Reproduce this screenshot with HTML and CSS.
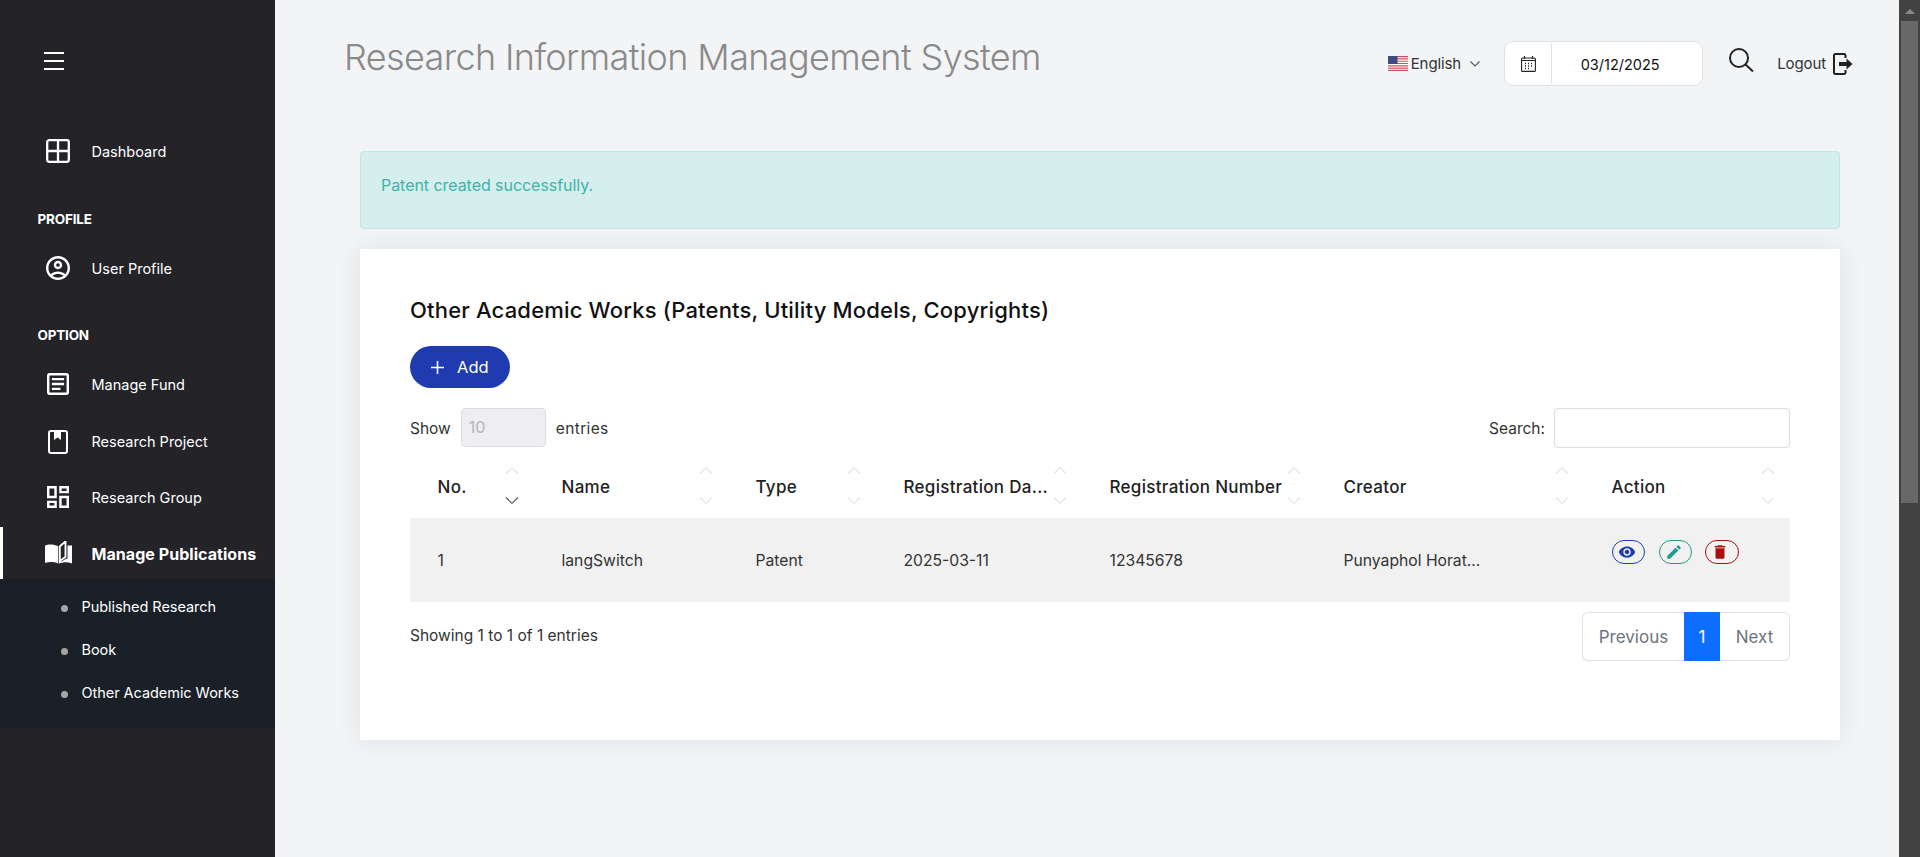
FILE: index.html
```html
<!DOCTYPE html>
<html lang="en">
<head>
<meta charset="utf-8">
<title>Research Information Management System</title>
<link rel="stylesheet" href="styles.css">
</head>
<body>
<div class="page">
  <aside class="sidebar">
    <div class="toggle"><span class="burger"><i></i><i></i><i></i></span></div>
    <nav class="nav">
      <a class="item"><span class="ico"><svg width="24" height="24" viewBox="0 0 24 24" fill="none" stroke="#fff" stroke-width="2.300"><rect x="1.200" y="1.200" width="21.600" height="21.600" rx="2"/><path d="M12 1v22M1 12h22"/></svg></span>Dashboard</a>
      <div class="label label-first">PROFILE</div>
      <a class="item item-after-label"><span class="ico"><svg width="24" height="24" viewBox="2 2 20 20" fill="#fff"><path d="M12 2C6.48 2 2 6.48 2 12s4.48 10 10 10 10-4.48 10-10S17.52 2 12 2zM7.35 18.5C8.66 17.56 10.26 17 12 17s3.34.56 4.65 1.5c-1.31.94-2.91 1.5-4.65 1.5s-3.34-.56-4.65-1.5zm10.79-1.38C16.45 15.8 14.32 15 12 15s-4.45.8-6.14 2.12C4.7 15.73 4 13.95 4 12c0-4.42 3.58-8 8-8s8 3.58 8 8c0 1.95-.7 3.73-1.86 5.12zM12 6c-1.93 0-3.5 1.57-3.5 3.5S10.07 13 12 13s3.5-1.57 3.5-3.5S13.93 6 12 6zm0 5c-.83 0-1.5-.67-1.5-1.5S11.17 8 12 8s1.5.67 1.5 1.5S12.83 11 12 11z"/></svg></span>User Profile</a>
      <div class="label">OPTION</div>
      <a class="item item-after-label item-tight"><span class="ico"><svg width="22" height="22" viewBox="3 3 18 18" fill="#fff"><path d="M19 5v14H5V5h14m0-2H5c-1.1 0-2 .9-2 2v14c0 1.1.9 2 2 2h14c1.1 0 2-.9 2-2V5c0-1.1-.9-2-2-2zM14 17H7v-2h7v2zm3-4H7v-2h10v2zm0-4H7V7h10v2z"/></svg></span>Manage Fund</a>
      <a class="item item-tight item-nudge"><span class="ico"><svg width="20" height="24" viewBox="0 0 20 24" fill="none" stroke="#fff" stroke-width="2"><rect x="1" y="1" width="18" height="22" rx="2"/><path d="M6 1h7v9l-3.500-2.500L6 10z" fill="#fff" stroke="none"/></svg></span>Research Project</a>
      <a class="item item-tight"><span class="ico"><svg width="22" height="22" viewBox="3 3 18 18" fill="#fff"><path d="M19 5v2h-4V5h4M9 5v6H5V5h4m10 8v6h-4v-6h4M9 17v2H5v-2h4M21 3h-8v6h8V3zM11 3H3v10h8V3zm10 8h-8v10h8V11zm-10 4H3v6h8v-6z"/></svg></span>Research Group</a>
      <a class="item item-active"><span class="ico"><svg width="27" height="24" viewBox="0 0 27 24"><path d="M0 4.500C3 3 8.500 2.800 13.200 5.200V22.500C9 20.600 4 20.600 0 22z" fill="#fff"/><path d="M14.800 5.500C16 4.300 18 2.500 20.500 0.500V16C18 17.500 16.500 18.500 14.800 20.500z" fill="none" stroke="#fff" stroke-width="1.900"/><path d="M22.500 4.500H27V22.500C22.500 20.800 18.500 20.800 14 22.800 16.500 19.800 19.500 18.500 22.500 17.500z" fill="#fff"/></svg></span>Manage Publications</a>
      <ul class="submenu">
        <li>Published Research</li>
        <li>Book</li>
        <li>Other Academic Works</li>
      </ul>
    </nav>
  </aside>

  <main class="main">
    <header class="topbar">
      <h1 class="title">Research Information Management System</h1>
      <div class="tools">
        <div class="lang">
          <svg class="flag" width="20" height="15" viewBox="0 0 20 15"><rect width="20" height="15" fill="#fff"/><path d="M0 .6h20M0 2.900h20M0 5.200h20M0 7.500h20M0 9.800h20M0 12.100h20M0 14.400h20" stroke="#c8525f" stroke-width="1.150"/><rect width="9.500" height="8" fill="#3f4a7f"/></svg>
          <span>English</span>
          <svg class="chev" width="10" height="6" viewBox="0 0 10 6" fill="none" stroke="#555" stroke-width="1.100"><path d="M.5.500 5 5 9.500.5"/></svg>
        </div>
        <div class="datebox">
          <span class="date-ico"><svg width="15" height="16" viewBox="0 0 15 16" fill="none" stroke="#222" stroke-width="1.100"><rect x=".6" y="2" width="13.800" height="13.400" rx="1"/><path d="M3.500 0v3M11.500 0v3M.6 4.500h13.800"/><path d="M4 7.500h1M7 7.500h1M10 7.500h1M4 10h1M7 10h1M10 10h1M4 12.500h1M7 12.500h1" stroke-width="1.400"/></svg></span>
          <span class="date-val">03/12/2025</span>
        </div>
        <svg class="search-ico" width="25" height="24" viewBox="0 0 25 24" fill="none" stroke="#222" stroke-width="2"><circle cx="10" cy="10" r="9"/><path d="m16.500 16.500 7.500 7"/></svg>
        <div class="logout">
          <span>Logout</span>
          <svg width="20" height="22" viewBox="0 0 20 22"><path d="M12.500 5V2.500a1.500 1.500 0 0 0-1.500-1.500H2.500A1.500 1.500 0 0 0 1 2.500v17A1.500 1.500 0 0 0 2.500 21H11a1.500 1.500 0 0 0 1.500-1.500V17" fill="none" stroke="#222" stroke-width="2"/><path d="M6 9h7.500V5.500L19.500 11l-6 5.500V13H6z" fill="#222"/></svg>
        </div>
      </div>
    </header>

    <section class="content">
      <div class="alert">Patent created successfully.</div>
      <div class="card">
        <h2 class="card-title">Other Academic Works (Patents, Utility Models, Copyrights)</h2>
        <button class="add"><svg width="13" height="13" viewBox="0 0 13 13" stroke="#fff" stroke-width="1.600"><path d="M6.500 0v13M0 6.500h13"/></svg>Add</button>
        <div class="controls">
          <div class="show">Show <span class="select">10</span> <span class="entries">entries</span></div>
          <div class="search">Search: <span class="input"></span></div>
        </div>
        <table class="table">
          <colgroup>
            <col class="c1"><col class="c2"><col class="c3"><col class="c4"><col class="c5"><col class="c6"><col class="c7">
          </colgroup>
          <thead>
            <tr>
              <th><div class="th"><span>No.</span><span class="sort"><svg width="14" height="7" viewBox="0 0 14 7"><path d="M1 6.500 7 .7l6 5.800"/></svg><svg class="on" width="14" height="7" viewBox="0 0 14 7"><path d="M1 .5l6 5.800L13 .5"/></svg></span></div></th>
              <th><div class="th"><span>Name</span><span class="sort"><svg width="14" height="7" viewBox="0 0 14 7"><path d="M1 6.500 7 .7l6 5.800"/></svg><svg width="14" height="7" viewBox="0 0 14 7"><path d="M1 .5l6 5.800L13 .5"/></svg></span></div></th>
              <th><div class="th"><span>Type</span><span class="sort"><svg width="14" height="7" viewBox="0 0 14 7"><path d="M1 6.500 7 .7l6 5.800"/></svg><svg width="14" height="7" viewBox="0 0 14 7"><path d="M1 .5l6 5.800L13 .5"/></svg></span></div></th>
              <th><div class="th"><span>Registration Da...</span><span class="sort"><svg width="14" height="7" viewBox="0 0 14 7"><path d="M1 6.500 7 .7l6 5.800"/></svg><svg width="14" height="7" viewBox="0 0 14 7"><path d="M1 .5l6 5.800L13 .5"/></svg></span></div></th>
              <th><div class="th"><span>Registration Number</span><span class="sort"><svg width="14" height="7" viewBox="0 0 14 7"><path d="M1 6.500 7 .7l6 5.800"/></svg><svg width="14" height="7" viewBox="0 0 14 7"><path d="M1 .5l6 5.800L13 .5"/></svg></span></div></th>
              <th><div class="th"><span>Creator</span><span class="sort"><svg width="14" height="7" viewBox="0 0 14 7"><path d="M1 6.500 7 .7l6 5.800"/></svg><svg width="14" height="7" viewBox="0 0 14 7"><path d="M1 .5l6 5.800L13 .5"/></svg></span></div></th>
              <th><div class="th"><span>Action</span><span class="sort"><svg width="14" height="7" viewBox="0 0 14 7"><path d="M1 6.500 7 .7l6 5.800"/></svg><svg width="14" height="7" viewBox="0 0 14 7"><path d="M1 .5l6 5.800L13 .5"/></svg></span></div></th>
            </tr>
          </thead>
          <tbody>
            <tr>
              <td>1</td>
              <td>langSwitch</td>
              <td>Patent</td>
              <td>2025-03-11</td>
              <td>12345678</td>
              <td>Punyaphol Horat...</td>
              <td class="actions">
                <div class="btns">
                  <span class="btn view"><svg width="18" height="18" viewBox="0 0 24 24" fill="#203ab0"><path d="M12 4.500C7 4.500 2.730 7.610 1 12c1.730 4.390 6 7.500 11 7.500s9.270-3.110 11-7.500c-1.730-4.390-6-7.500-11-7.500zM12 17c-2.760 0-5-2.240-5-5s2.240-5 5-5 5 2.240 5 5-2.240 5-5 5zm0-8c-1.660 0-3 1.340-3 3s1.340 3 3 3 3-1.340 3-3-1.340-3-3-3z"/></svg></span>
                  <span class="btn edit"><svg width="18" height="18" viewBox="0 0 24 24" fill="#1f9d8d"><path d="M3 17.250V21h3.750L17.810 9.940l-3.750-3.750L3 17.250zM20.710 7.040c.39-.39.39-1.020 0-1.410l-2.340-2.340c-.39-.39-1.020-.39-1.410 0l-1.830 1.830 3.750 3.750 1.830-1.830z"/></svg></span>
                  <span class="btn del"><svg width="18" height="18" viewBox="0 0 24 24" fill="#a80f0f"><path d="M6 19c0 1.100.9 2 2 2h8c1.100 0 2-.9 2-2V7H6v12zM19 4h-3.500l-1-1h-5l-1 1H5v2h14V4z"/></svg></span>
                </div>
              </td>
            </tr>
          </tbody>
        </table>
        <div class="footer">
          <div class="info">Showing 1 to 1 of 1 entries</div>
          <div class="pager">
            <span class="pg pg-prev">Previous</span>
            <span class="pg pg-cur">1</span>
            <span class="pg pg-next">Next</span>
          </div>
        </div>
      </div>
    </section>
  </main>

  <div class="scrollbar">
    <span class="arrow"></span>
    <span class="thumb"></span>
  </div>
</div>
</body>
</html>
```

FILE: styles.css
```css
* { box-sizing: border-box; }
html, body { margin: 0; height: 857px; overflow: hidden; }
body { font-family: Inter, "Noto Sans", sans-serif; color: #333; background: #f3f4f6; }

.page { display: flex; height: 857px; }

/* Sidebar */
.sidebar { width: 275px; flex: none; background: #232328; color: #fff; }
.toggle { height: 123px; padding: 52px 0 0 44px; }
.burger { display: flex; flex-direction: column; gap: 6.5px; width: 20px; }
.burger i { display: block; height: 1.5px; background: #fff; }

.nav { font-size: 14.5px; }
.item { display: flex; align-items: center; height: 56px; padding-left: 42px; }
.item-tight { height: 56.5px; }
.item-nudge { padding-top: 2px; }
.ico { width: 32px; margin-right: 17.5px; display: flex; justify-content: center; flex: none; }
.label { font-size: 13.5px; font-weight: 700; line-height: 24px; height: 24px; padding-left: 37.500px; margin-top: 27px; letter-spacing: -.2px; }
.label-first { margin-top: 28px; }
.item-after-label { margin-top: 9px; }
.item-active { height: 52px; margin-top: 1.75px; padding-top: 2px; font-size: 16px; font-weight: 700; letter-spacing: .05px; box-shadow: inset 3px 0 0 #fff; }
.item-active .ico { margin-top: -2px; }
.submenu { list-style: none; margin: 0; padding: 5px 0 15px 81.5px; background: #1a2027; letter-spacing: -.05px; }
.submenu li { height: 43px; line-height: 45px; position: relative; }
.submenu li::before { content: ""; position: absolute; left: -20.5px; top: 20.5px; width: 7px; height: 7px; border-radius: 50%; background: #a5a5a5; }

/* Main */
.main { flex: 1; min-width: 0; }
.topbar { height: 151px; display: flex; justify-content: space-between; padding: 0 46px 0 69px; align-items: flex-start; }
.title { margin: 33px 0 0; font-size: 36px; line-height: 48px; font-weight: 300; color: #8a8a8a; letter-spacing: -.62px; }
.tools { display: flex; align-items: center; margin-top: 41px; font-size: 15px; }
.lang { display: flex; align-items: center; color: #333; letter-spacing: -.1px; }
.flag { margin-right: 3px; }
.chev { margin-left: 9px; }
.datebox { display: flex; width: 199px; height: 45px; margin-left: 24px; background: #fff; border: 1px solid #e2e2e2; border-radius: 9px; }
.date-ico { width: 47px; margin: 1px 0; display: flex; align-items: center; justify-content: center; border-right: 1px solid #e2e2e2; }
.date-val { flex: 1; padding-right: 14px; text-align: center; line-height: 45px; color: #111; font-size: 14.5px; }
.search-ico { margin-left: 26px; margin-top: -8px; }
.logout { display: flex; align-items: center; margin-left: 23px; margin-top: -1px; color: #333; letter-spacing: -.1px; }
.logout svg { margin-left: 7px; margin-top: 1px; }

.content { padding: 0 59px 0 85px; }
.alert { height: 78px; padding-left: 20px; line-height: 67px; font-size: 16px; color: #3db5a6; background: #d5eeee; border: 1px solid #bfe7e3; border-radius: 4px; letter-spacing: -.05px; }
.card { margin-top: 20px; height: 491px; padding: 46px 50px 0; background: #fff; box-shadow: 0 0 24px rgba(40, 50, 70, .1); }
.card-title { margin: 0; font-size: 22px; line-height: 30px; font-weight: 550; color: #111; letter-spacing: .18px; }
.add { display: flex; align-items: center; gap: 13px; width: 100px; height: 42px; margin-top: 21px; padding: 0 0 0 21px; border: 0; border-radius: 21px; background: #203ab0; color: #fff; font: 400 16.5px Inter, sans-serif; }
.controls { display: flex; justify-content: space-between; align-items: center; height: 40px; margin-top: 20px; font-size: 15.5px; }
.show, .search { display: flex; align-items: center; }
.select { width: 85px; height: 39px; margin: -1px 10px 0 10px; padding-left: 7px; line-height: 37px; color: #b5b5b8; font-size: 16px; background: #eeeef1; border: 1px solid #dcdcdf; border-radius: 4px; }
.entries { letter-spacing: .35px; }
.input { width: 236px; height: 40px; margin-left: 9px; margin-top: -1px; background: #fff; border: 1px solid #dcdce2; border-radius: 4px; }

.table { width: 1380px; table-layout: fixed; border-collapse: collapse; }
.c1 { width: 124px; } .c2 { width: 194px; } .c3 { width: 148px; } .c4 { width: 206px; } .c5 { width: 234px; } .c6 { width: 268px; } .c7 { width: 206px; }
.table th { height: 70px; padding: 0 15px 0 27.5px; text-align: left; font-size: 17px; font-weight: 550; color: #222; }
.th { display: flex; justify-content: space-between; align-items: center; white-space: nowrap; letter-spacing: .3px; }
.th > span:first-child { padding-top: 8px; }
.sort { display: flex; flex-direction: column; gap: 23px; padding-top: 5px; flex: none; }
.sort svg { display: block; fill: none; stroke: #e3e3e3; stroke-width: 1.100; }
.sort svg.on { stroke: #555; }
.table td { height: 84px; padding: 0 10px 0 27.5px; background: #f1f1f1; font-size: 15.7px; color: #333; white-space: nowrap; }
.table td.actions { vertical-align: top; padding-top: 22px; }
.btns { display: flex; gap: 14px; }
.btn { display: flex; align-items: center; width: 33px; height: 24px; padding-left: 5px; border: 1px solid; border-radius: 12px; }
.view { border-color: #203ab0; }
.edit { border-color: #1f9d8d; }
.del { width: 34px; margin-left: -1px; border-color: #a80f0f; }

.footer { display: flex; justify-content: space-between; margin-top: 10px; }
.info { font-size: 15.5px; line-height: 47px; }
.pager { display: flex; height: 49px; font-size: 17px; line-height: 48px; color: #6c757d; background: #fff; }
.pg { border: 1px solid #dee2e6; text-align: center; }
.pg-prev { width: 102px; border-radius: 6px 0 0 6px; border-right: 0; }
.pg-cur { width: 36px; color: #fff; background: #0d6efd; border-color: #0d6efd; }
.pg-next { width: 70px; border-radius: 0 6px 6px 0; border-left: 0; }

/* Scrollbar */
.scrollbar { width: 21px; flex: none; padding-left: 2px; background: #424242; }
.arrow { display: block; width: 0; height: 0; margin: 9px 0 0 4px; border-left: 5px solid transparent; border-right: 5px solid transparent; border-bottom: 5px solid #8a8a8a; }
.thumb { display: block; width: 17px; height: 482px; margin-top: 7px; background: #686868; }
```
